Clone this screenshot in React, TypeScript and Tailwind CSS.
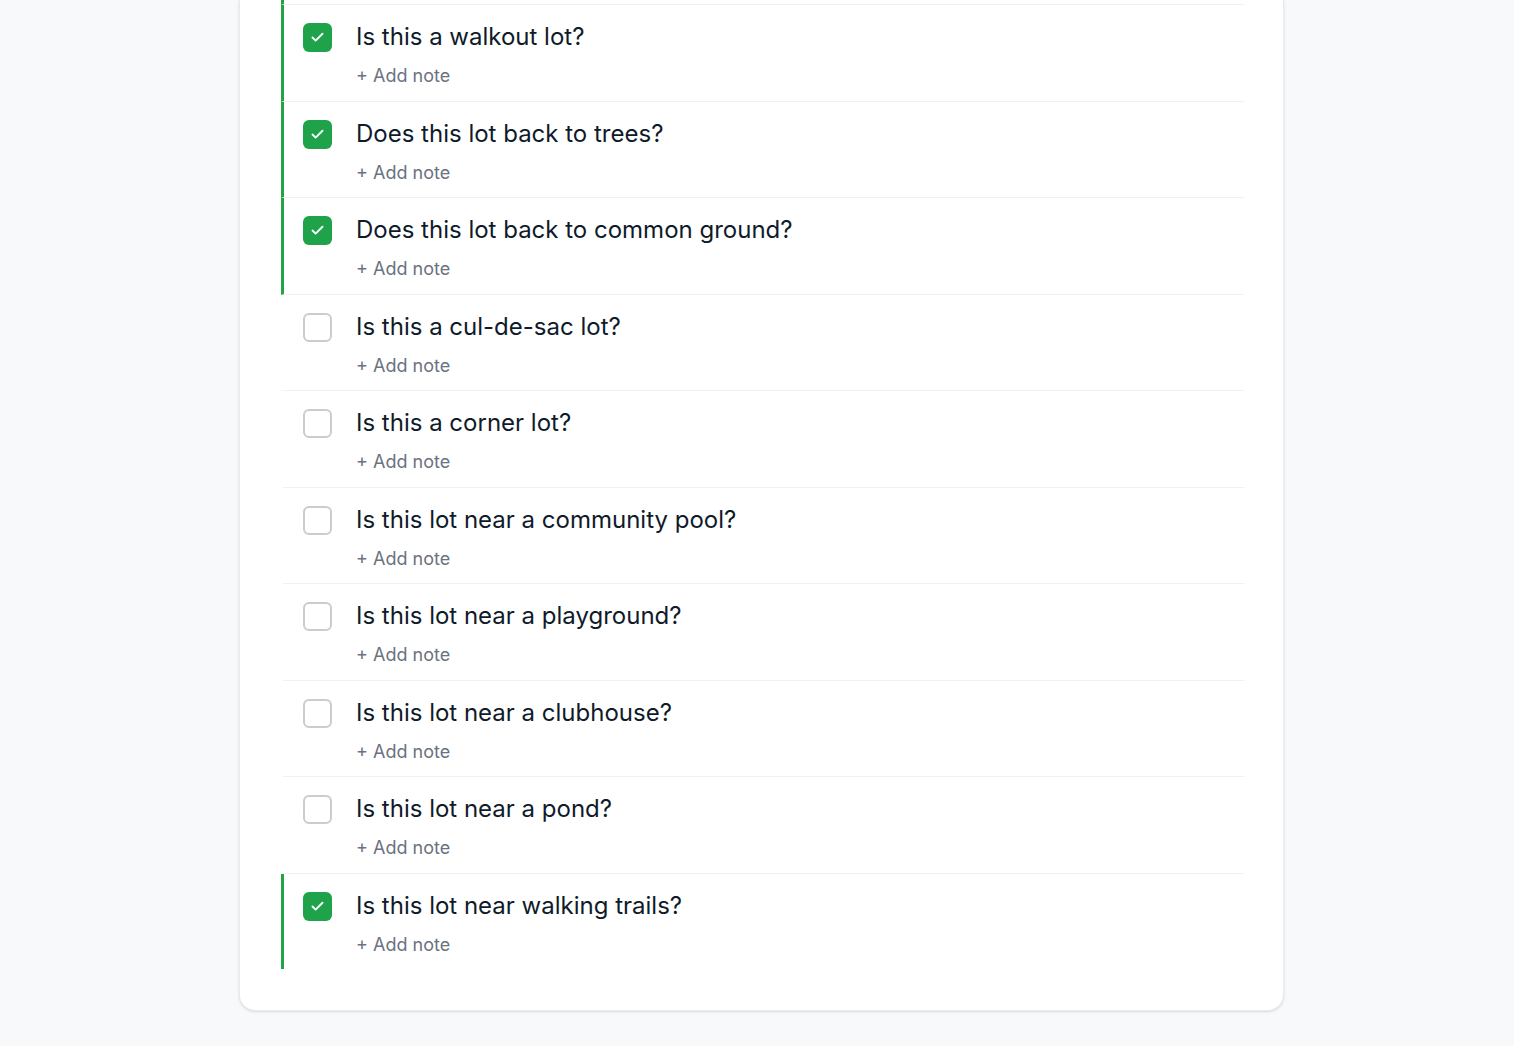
import { Check } from "lucide-react";

interface Question {
  id: number;
  text: string;
  checked: boolean;
}

const questions: Question[] = [
  { id: 1, text: "Is this a walkout lot?", checked: true },
  { id: 2, text: "Does this lot back to trees?", checked: true },
  { id: 3, text: "Does this lot back to common ground?", checked: true },
  { id: 4, text: "Is this a cul-de-sac lot?", checked: false },
  { id: 5, text: "Is this a corner lot?", checked: false },
  { id: 6, text: "Is this lot near a community pool?", checked: false },
  { id: 7, text: "Is this lot near a playground?", checked: false },
  { id: 8, text: "Is this lot near a clubhouse?", checked: false },
  { id: 9, text: "Is this lot near a pond?", checked: false },
  { id: 10, text: "Is this lot near walking trails?", checked: true },
];

function CheckBox({ checked }: { checked: boolean }) {
  if (checked) {
    return (
      <div className="mt-[2px] w-[29px] h-[29px] shrink-0 rounded-md bg-[#1fa34a] flex items-center justify-center">
        <Check size={15} strokeWidth={3} className="text-white" />
      </div>
    );
  }
  return <div className="mt-[2px] w-[29px] h-[29px] shrink-0 rounded-md border-2 border-[#c9ccd1] bg-white" />;
}

function Row({ q, last }: { q: Question; last: boolean }) {
  return (
    <div
      className={`flex items-start gap-6 pl-[19px] pt-4 pb-[11.5px] border-l-[3px] ${
        q.checked ? "border-l-[#22a34a]" : "border-l-transparent"
      } ${last ? "" : "border-b border-b-[#f0f1f3]"}`}
    >
      <CheckBox checked={q.checked} />
      <div className="flex flex-col">
        <span className="text-[24px] leading-[32px] text-[#0f1b2a]">{q.text}</span>
        <button className="self-start mt-[9px] text-[18px] leading-[27px] text-[#6b7280]">+ Add note</button>
      </div>
    </div>
  );
}

export default function App() {
  return (
    <div className="min-h-screen bg-[#f8f9fb] pb-[35px]" style={{ fontFamily: "Inter, 'Noto Sans', sans-serif" }}>
      <div className="ml-[239px] w-[1045px] bg-white border border-t-0 border-[#e8eaee] rounded-b-2xl shadow-sm pl-[41px] pr-[39px] pb-[41px]">
        {/* tail of the row above the fold */}
        <div className="h-[5px] border-l-[3px] border-l-[#22a34a] border-b border-b-[#f0f1f3]" />
        {questions.map((q, i) => (
          <Row key={q.id} q={q} last={i === questions.length - 1} />
        ))}
      </div>
    </div>
  );
}
